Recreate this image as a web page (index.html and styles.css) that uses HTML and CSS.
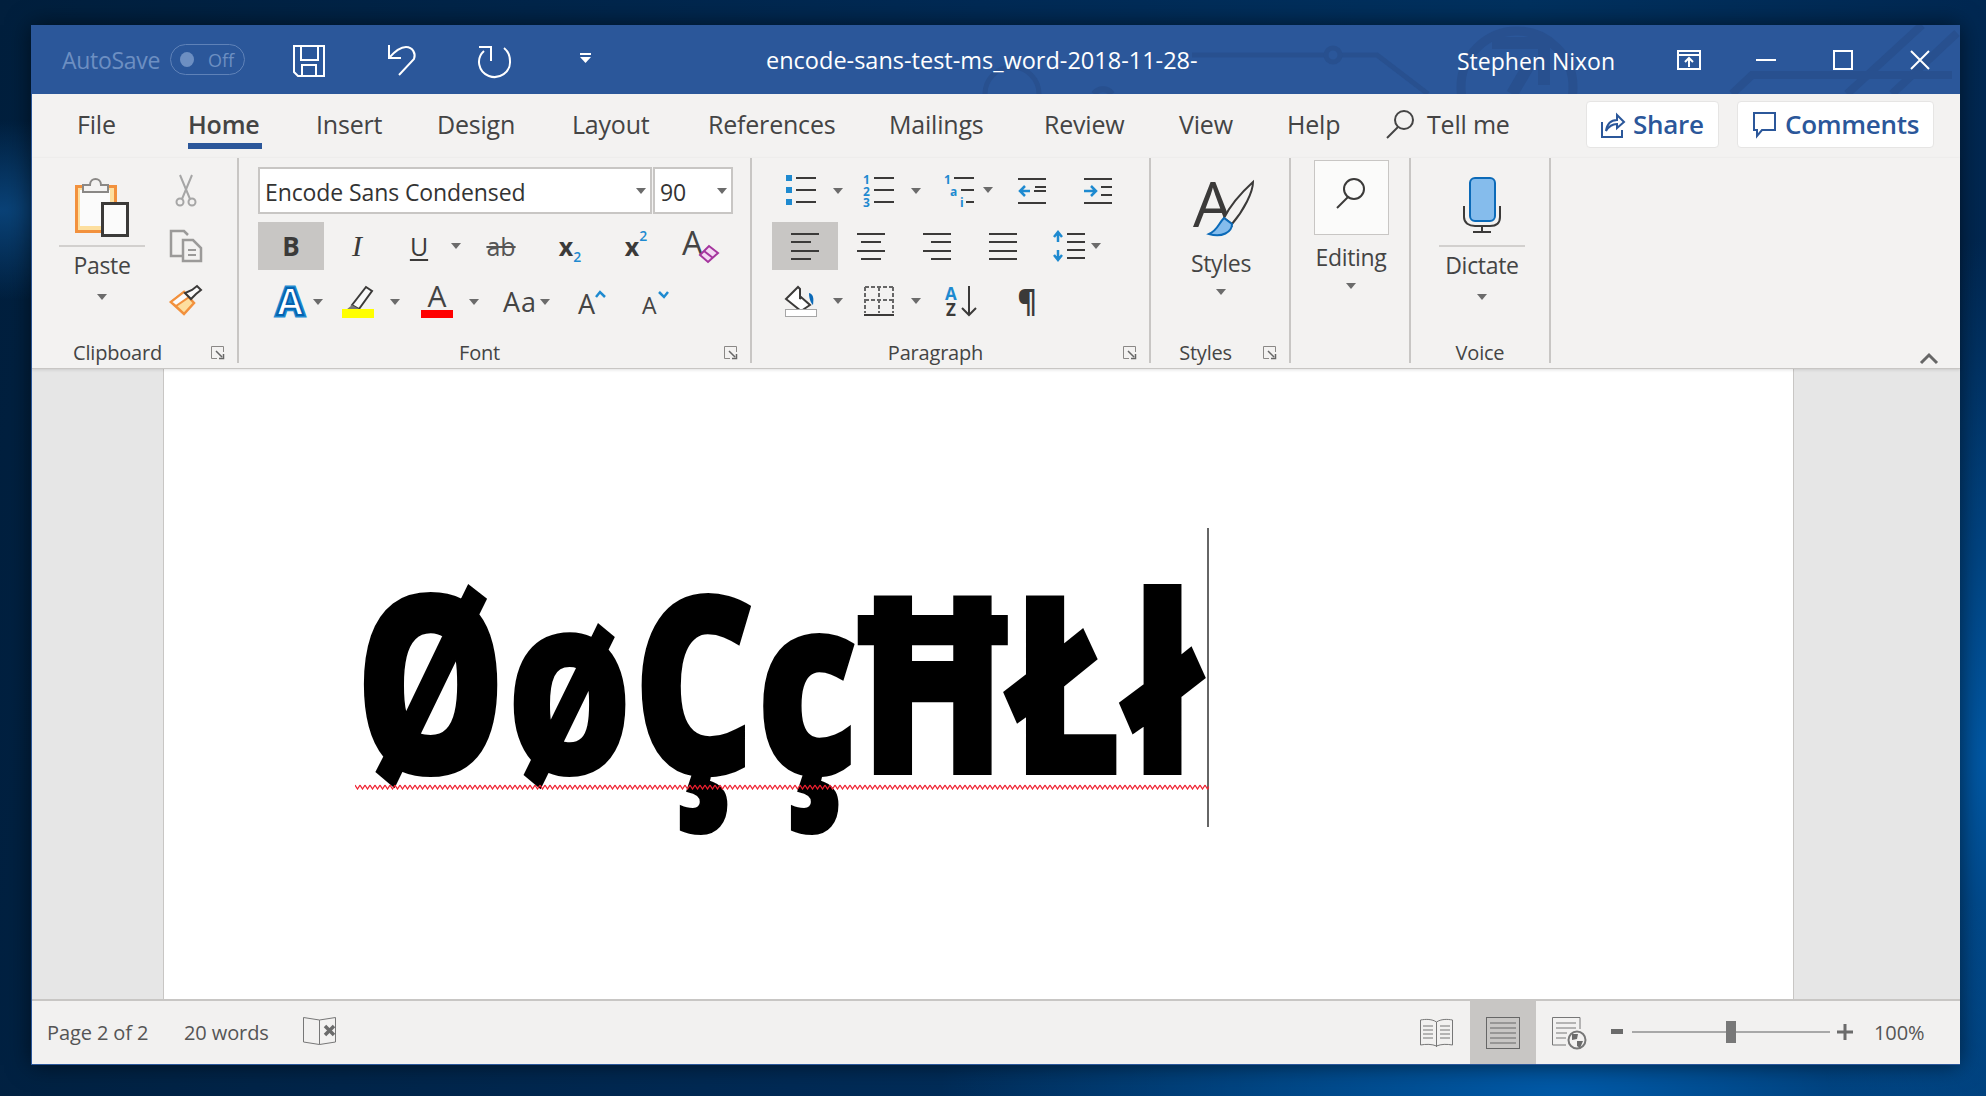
FILE: index.html
```html
<!DOCTYPE html>
<html lang="en">
<head>
    <meta charset="UTF-8">
    <title>encode-sans-test-ms_word-2018-11-28- - Word</title>
    <link rel="stylesheet" href="styles.css">
</head>
<body>

<div class="window">

    <!-- title bar -->
    <div class="titlebar">
        <svg class="circuit" width="1928" height="69" viewBox="0 0 1928 69" fill="none" stroke="#28508f" stroke-width="5">
            <path d="M1160 30H1295M1307 30H1345L1396 69"/>
            <circle cx="1301" cy="30" r="7"/>
            <circle cx="980" cy="69" r="27"/>
            <path d="M1062 69a11 11 0 0 1 18 0" stroke-width="6"/>
            <circle cx="1485" cy="62" r="56" stroke-width="9"/>
            <path d="M1460 18H1512L1512 60M1500 35L1480 69" stroke-width="12"/>
            <path d="M1700 69L1720 50H1920M1815 69L1890 0M1860 69L1925 8" stroke-width="8"/>
        </svg>
        <span class="autosave">AutoSave</span>
        <div class="toggle"><span class="toggle-dot"></span><span>Off</span></div>
        <svg class="qat-save" width="32" height="32" viewBox="0 0 32 32" fill="none" stroke="#fff" stroke-width="2">
            <path d="M1 1H31V31H5L1 27Z"/>
            <path d="M8 1V15H25V1M9 31V20H23V31"/>
        </svg>
        <svg class="qat-undo" width="29" height="33" viewBox="0 0 29 33" fill="none" stroke="#fff" stroke-width="2">
            <path d="M2 2V15H14M2 15C8 8 13 4 19 4C26 4 29 11 27 16L12 32"/>
        </svg>
        <svg class="qat-redo" width="33" height="32" viewBox="0 0 33 32" fill="none" stroke="#fff" stroke-width="2">
            <path d="M26 3C31 7 32 12 32 16A15.500 15 0 1 1 6 6"/>
            <path d="M1 2H13V16"/>
        </svg>
        <svg class="qat-more" width="11" height="10" viewBox="0 0 11 10" fill="#fff">
            <rect width="11" height="2"/>
            <path d="M0 4H11L5.500 10Z"/>
        </svg>
        <span class="doc-title">encode-sans-test-ms_word-2018-11-28-</span>
        <span class="user">Stephen Nixon</span>
        <svg class="win-display" width="24" height="20" viewBox="0 0 24 20" fill="none" stroke="#fff" stroke-width="2">
            <rect x="1" y="1" width="22" height="18"/>
            <path d="M1 5H23M12 17V8M8 12L12 8L16 12"/>
        </svg>
        <span class="win-min"></span>
        <span class="win-max"></span>
        <svg class="win-close" width="20" height="20" viewBox="0 0 20 20" stroke="#fff" stroke-width="2">
            <path d="M1 1L19 19M19 1L1 19"/>
        </svg>
    </div>

    <!-- tabs -->
    <div class="tabs">
        <span class="tab">File</span>
        <span class="tab tab-active">Home</span>
        <span class="tab">Insert</span>
        <span class="tab">Design</span>
        <span class="tab">Layout</span>
        <span class="tab">References</span>
        <span class="tab">Mailings</span>
        <span class="tab">Review</span>
        <span class="tab">View</span>
        <span class="tab">Help</span>
        <svg width="28" height="29" viewBox="0 0 28 29" fill="none" stroke="#444" stroke-width="2">
            <circle cx="18" cy="10" r="9"/>
            <path d="M12 17L1 28"/>
        </svg>
        <span class="tab">Tell me</span>
        <div class="top-btn share-btn">
            <svg width="24" height="30" viewBox="0 0 24 30" fill="none" stroke="#2b579a" stroke-width="2">
                <path d="M1 13V28H21V21M5 22C6 15 10 11 16 11V6L23 13L16 19V15C11 15 8 17 5 22Z"/>
            </svg>
            <span>Share</span>
        </div>
        <div class="top-btn comments-btn">
            <svg width="23" height="27" viewBox="0 0 23 27" fill="none" stroke="#2b579a" stroke-width="2">
                <path d="M1 2H22V19H9L4 25V19H1Z"/>
            </svg>
            <span>Comments</span>
        </div>
    </div>

    <!-- ribbon -->
    <div class="ribbon">

        <div class="group group-clipboard">
            <div class="clip-body">
                <div class="big-btn paste-btn">
                    <svg width="54" height="60" viewBox="0 0 54 60">
                        <rect x="1.500" y="9.500" width="39" height="45" fill="#fddf9f" stroke="#f2913d" stroke-width="3"/>
                        <rect x="5" y="13" width="30" height="36" fill="#fbfbfb"/>
                        <path d="M8 15V8H15C15 0 26 0 26 8H33V15Z" fill="#f3f2f1" stroke="#8a8886" stroke-width="2"/>
                        <rect x="27.500" y="26.500" width="25" height="32" fill="#fbfbfb" stroke="#3b3a39" stroke-width="3"/>
                    </svg>
                    <span class="big-line"></span>
                    <span class="big-text">Paste</span>
                    <span class="caret"></span>
                </div>
                <div class="clip-tools">
                    <svg width="20" height="32" viewBox="0 0 20 32" fill="none" stroke="#a6a6a6" stroke-width="2">
                        <path d="M4 0L14 24M16 0L6 24"/>
                        <circle cx="4" cy="27" r="3.500"/>
                        <circle cx="16" cy="27" r="3.500"/>
                    </svg>
                    <svg width="32" height="32" viewBox="0 0 32 32" fill="none" stroke="#9b9a99" stroke-width="2.500">
                        <path d="M12 26H1V1H14L18 5"/>
                        <path d="M13 10H23L31 18V31H13Z"/>
                        <path d="M18 20H26M18 25H26" stroke-width="2"/>
                    </svg>
                    <svg width="32" height="30" viewBox="0 0 32 30">
                        <path d="M1 17L14 7L24 18L14 29Z" fill="#fddf9f" stroke="#f2913d" stroke-width="2.500"/>
                        <path d="M1 17L14 7L19 12L6 21Z" fill="#fbfbfb" stroke="#f2913d" stroke-width="2"/>
                        <path d="M15 8L21 14L26 9L31 5L27 1L22 5Z" fill="#fbfbfb" stroke="#3b3a39" stroke-width="2"/>
                    </svg>
                </div>
            </div>
            <div class="group-label">Clipboard</div>
            <svg class="launcher" width="13" height="13" viewBox="0 0 13 13" fill="none" stroke="#8a8886">
                <path d="M12.500 6V0.500H0.500V12.500H6"/>
                <path d="M5 5L11 11M12.500 8V12.500H8" stroke="#666" stroke-width="1.500"/>
            </svg>
        </div>

        <div class="group group-font">
            <div class="font-pickers">
                <div class="picker picker-name">
                    <span>Encode Sans Condensed</span>
                    <span class="caret"></span>
                </div>
                <div class="picker picker-size">
                    <span>90</span>
                    <span class="caret"></span>
                </div>
            </div>
            <div class="tool-row font-row-a">
                <div class="tool tool-on glyph-b">B</div>
                <div class="tool glyph-i">I</div>
                <div class="tool glyph-u">U</div>
                <span class="caret"></span>
                <div class="tool glyph-ab">ab</div>
                <div class="tool glyph-x"><span>x</span><sub>2</sub></div>
                <div class="tool glyph-x"><span>x</span><sup>2</sup></div>
                <svg width="40" height="36" viewBox="0 0 40 36">
                    <text x="0" y="27" class="svg-a" font-size="33" fill="#444">A</text>
                    <path d="M18 27L27 18L36 25L26 34Z" fill="#f3d9f3" stroke="#a5359e" stroke-width="2"/>
                    <path d="M22 23L31 30" stroke="#a5359e" stroke-width="2"/>
                </svg>
            </div>
            <div class="tool-row font-row-b">
                <svg width="30" height="32" viewBox="0 0 30 32">
                    <text x="15" y="29" text-anchor="middle" class="svg-a" font-size="38" font-weight="700" fill="#cfe6f8" stroke="#1e8ad0" stroke-width="5" paint-order="stroke">A</text>
                    <text x="15" y="29" text-anchor="middle" class="svg-a" font-size="38" font-weight="700" fill="#fff" stroke="#0563b0" stroke-width="2">A</text>
                </svg>
                <span class="caret"></span>
                <svg width="32" height="33" viewBox="0 0 32 33">
                    <path d="M10 20L24 2L30 6L17 24Z" fill="#f8f8f8" stroke="#3b3a39" stroke-width="2"/>
                    <path d="M10 20L17 24L13 25H4Z" fill="#777"/>
                    <rect y="24" width="32" height="9" fill="#ffff00"/>
                </svg>
                <span class="caret"></span>
                <svg width="32" height="33" viewBox="0 0 32 33">
                    <text x="16" y="22" text-anchor="middle" class="svg-a" font-size="30" fill="#444">A</text>
                    <rect y="25" width="32" height="8" fill="#ff0000"/>
                </svg>
                <span class="caret"></span>
                <div class="tool glyph-aa">Aa</div>
                <span class="caret"></span>
                <svg width="28" height="26" viewBox="0 0 28 26">
                    <text x="0" y="25" class="svg-a" font-size="27" fill="#444">A</text>
                    <path d="M18 8L22 3L27 8" fill="none" stroke="#1e8ad0" stroke-width="2.500"/>
                </svg>
                <svg width="28" height="26" viewBox="0 0 28 26">
                    <text x="0" y="25" class="svg-a" font-size="23" fill="#444">A</text>
                    <path d="M17 3L22 8L26 3" fill="none" stroke="#1e8ad0" stroke-width="2.500"/>
                </svg>
            </div>
            <div class="group-label">Font</div>
            <svg class="launcher" width="13" height="13" viewBox="0 0 13 13" fill="none" stroke="#8a8886">
                <path d="M12.500 6V0.500H0.500V12.500H6"/>
                <path d="M5 5L11 11M12.500 8V12.500H8" stroke="#666" stroke-width="1.500"/>
            </svg>
        </div>

        <div class="group group-para">
            <div class="tool-row para-row-a">
                <svg width="30" height="32" viewBox="0 0 30 32" fill="#1e8ad0">
                    <rect y="0" width="6" height="6"/><rect y="12" width="6" height="6"/><rect y="24" width="6" height="6"/>
                    <path d="M10 3H30M10 15H30M10 27H30" stroke="#3b3a39" stroke-width="2"/>
                </svg>
                <span class="caret"></span>
                <svg width="31" height="32" viewBox="0 0 31 32" fill="#1e8ad0">
                    <text x="0" y="9" class="svg-num">1</text><text x="0" y="21" class="svg-num">2</text><text x="0" y="32" class="svg-num">3</text>
                    <path d="M11 3H31M11 15H31M11 27H31" stroke="#3b3a39" stroke-width="2"/>
                </svg>
                <span class="caret"></span>
                <svg width="49" height="32" viewBox="0 0 49 32" fill="#1e8ad0">
                    <text x="0" y="9" class="svg-num">1</text><text x="6" y="21" class="svg-num">a</text><text x="16" y="32" class="svg-num">i</text>
                    <path d="M10 3H30M17 15H30M22 27H30" stroke="#3b3a39" stroke-width="2"/>
                    <path d="M39 12H49L44 18Z" fill="#6b6b6b"/>
                </svg>
                <svg width="28" height="26" viewBox="0 0 28 26" fill="none" stroke="#3b3a39" stroke-width="2">
                    <path d="M0 1H28M16 13H28M16 25H28M0 25H0"/>
                    <path d="M0 25H28M17 9H28"/>
                    <path d="M12 13H2M7 8L2 13L7 18" stroke="#1e8ad0" stroke-width="2.500"/>
                </svg>
                <svg width="28" height="26" viewBox="0 0 28 26" fill="none" stroke="#3b3a39" stroke-width="2">
                    <path d="M0 1H28M0 25H28M17 9H28M17 17H28"/>
                    <path d="M0 13H11M7 8L12 13L7 18" stroke="#1e8ad0" stroke-width="2.500"/>
                </svg>
            </div>
            <div class="tool-row para-row-b">
                <div class="tool tool-on">
                    <svg class="lines" width="28" height="27" viewBox="0 0 28 27"><path d="M0 1H28M0 9H20M0 18H28M0 26H20"/></svg>
                </div>
                <svg class="lines" width="28" height="27" viewBox="0 0 28 27"><path d="M0 1H28M4 9H24M0 18H28M4 26H24"/></svg>
                <svg class="lines" width="28" height="27" viewBox="0 0 28 27"><path d="M0 1H28M8 9H28M0 18H28M8 26H28"/></svg>
                <svg class="lines" width="28" height="27" viewBox="0 0 28 27"><path d="M0 1H28M0 9H28M0 18H28M0 26H28"/></svg>
                <svg width="48" height="30" viewBox="0 0 48 30" fill="none">
                    <path d="M14 3H32M14 11H32M14 19H32M14 27H32" stroke="#3b3a39" stroke-width="2"/>
                    <path d="M5 1V11M1 6L5 1L9 6M5 19V29M1 24L5 29L9 24" stroke="#1e8ad0" stroke-width="2.500"/>
                    <path d="M38 12H48L43 18Z" fill="#6b6b6b"/>
                </svg>
            </div>
            <div class="tool-row para-row-c">
                <svg width="32" height="32" viewBox="0 0 32 32">
                    <path d="M1 14L13 2L15 4V14L16 12L25 20L16 26Z" fill="#fff" stroke="#3b3a39" stroke-width="2"/>
                    <path d="M24 8C28 9 29 12 28 20C26 18 24 14 24 8Z" fill="#0b6ab8"/>
                    <rect x="0.500" y="24.500" width="31" height="7" fill="#fff" stroke="#a6a6a6"/>
                </svg>
                <span class="caret"></span>
                <svg width="30" height="30" viewBox="0 0 30 30" fill="none" stroke="#666" stroke-width="2" stroke-dasharray="4 2">
                    <path d="M1 1H29M1 1V27M29 1V27M15 1V27M1 14H29"/>
                    <path d="M0 29H30" stroke="#3b3a39" stroke-dasharray="none"/>
                </svg>
                <span class="caret"></span>
                <svg width="32" height="32" viewBox="0 0 32 32">
                    <text x="0" y="15" class="svg-a" font-size="17" font-weight="700" fill="#1e8ad0">A</text>
                    <text x="1" y="31" class="svg-a" font-size="17" font-weight="700" fill="#3b3a39">Z</text>
                    <path d="M24 1V30M17 23L24 30L31 23" fill="none" stroke="#3b3a39" stroke-width="2"/>
                </svg>
                <div class="tool glyph-pil">¶</div>
            </div>
            <div class="group-label">Paragraph</div>
            <svg class="launcher" width="13" height="13" viewBox="0 0 13 13" fill="none" stroke="#8a8886">
                <path d="M12.500 6V0.500H0.500V12.500H6"/>
                <path d="M5 5L11 11M12.500 8V12.500H8" stroke="#666" stroke-width="1.500"/>
            </svg>
        </div>

        <div class="group group-styles">
            <div class="big-btn styles-btn">
                <svg width="60" height="58" viewBox="0 0 60 58">
                    <text x="-1" y="47" class="svg-a" font-size="63" fill="#3b3a39">A</text>
                    <path d="M30 38C36 26 48 12 59 2C59 12 50 30 38 44Z" fill="#f3f2f1" stroke="#3b3a39" stroke-width="2"/>
                    <path d="M30 38L38 44C38 52 28 58 15 54C24 50 24 44 30 38Z" fill="#85bcec" stroke="#0b6ab8" stroke-width="2"/>
                </svg>
                <span class="big-text">Styles</span>
                <span class="caret"></span>
            </div>
            <div class="group-label">Styles</div>
            <svg class="launcher" width="13" height="13" viewBox="0 0 13 13" fill="none" stroke="#8a8886">
                <path d="M12.500 6V0.500H0.500V12.500H6"/>
                <path d="M5 5L11 11M12.500 8V12.500H8" stroke="#666" stroke-width="1.500"/>
            </svg>
        </div>

        <div class="group group-editing">
            <div class="big-btn editing-btn">
                <div class="editing-box">
                    <svg width="30" height="32" viewBox="0 0 30 32" fill="none" stroke="#3b3a39" stroke-width="2">
                        <circle cx="18" cy="12" r="10"/>
                        <path d="M12 20L1 31"/>
                    </svg>
                </div>
                <span class="big-text">Editing</span>
                <span class="caret"></span>
            </div>
        </div>

        <div class="group group-voice">
            <div class="big-btn dictate-btn">
                <svg width="38" height="56" viewBox="0 0 38 56" fill="none">
                    <rect x="7" y="1" width="25" height="43" rx="5" fill="#85bcec" stroke="#0b6ab8" stroke-width="2"/>
                    <path d="M1 29V40C1 46 6 49 12 49H27C33 49 37 46 37 40V29M19 49V55M10 55H28" stroke="#3b3a39" stroke-width="2"/>
                </svg>
                <span class="big-line"></span>
                <span class="big-text">Dictate</span>
                <span class="caret"></span>
            </div>
            <div class="group-label">Voice</div>
        </div>

        <svg class="collapse" width="18" height="12" viewBox="0 0 18 12" fill="none" stroke="#666" stroke-width="3">
            <path d="M1 11L9 3L17 11"/>
        </svg>
    </div>

    <!-- document -->
    <div class="doc-area">
        <div class="page">
            <div class="word">
                <div class="glyphs">ØøÇçĦŁł</div>
                <svg class="squiggle" width="854" height="6">
                    <defs>
                        <pattern id="wave" width="5" height="6" patternUnits="userSpaceOnUse">
                            <path d="M0 1L2.500 5L5 1" fill="none" stroke="#f02030" stroke-width="1.200"/>
                        </pattern>
                    </defs>
                    <rect width="854" height="6" fill="url(#wave)"/>
                </svg>
            </div>
        </div>
    </div>

    <!-- status bar -->
    <div class="statusbar">
        <span class="st-page">Page 2 of 2</span>
        <span class="st-words">20 words</span>
        <svg class="st-proof" width="33" height="28" viewBox="0 0 33 28" fill="none" stroke="#777">
            <path d="M16.500 3L0.500 0.500V25L16.500 27.500L32.500 25V0.500L16.500 3V27.500"/>
            <path d="M22 9L31 18M31 9L22 18" stroke-width="3.500" stroke="#6b6b6b"/>
        </svg>
        <svg class="st-read" width="33" height="30" viewBox="0 0 33 30" fill="none" stroke="#777">
            <path d="M16.500 4C12 1 6 1 0.500 2V27C6 26 12 26 16.500 28C21 26 27 26 32.500 27V2C27 1 21 1 16.500 4V29"/>
            <path d="M3 8H13M3 12H13M3 16H13M3 20H13M20 8H30M20 12H30M20 16H30M20 20H30"/>
        </svg>
        <div class="st-print">
            <svg width="34" height="32" viewBox="0 0 34 32" fill="none" stroke="#666">
                <rect x="0.500" y="0.500" width="33" height="31"/>
                <path d="M4 6H30M4 11H30M4 16H30M4 21H30M4 26H30"/>
            </svg>
        </div>
        <svg class="st-web" width="34" height="32" viewBox="0 0 34 32" fill="none" stroke="#777">
            <path d="M14 28H0.500V0.500H28V12"/>
            <path d="M4 6H24M4 11H24M4 16H15M4 21H14"/>
            <circle cx="25" cy="23" r="8.500" fill="#f2f1f0" stroke-width="2"/>
            <path d="M20 17L26 17L25 22L20 23ZM25 24L31 24L28 31L25 29Z" fill="#6b6b6b" stroke="none"/>
        </svg>
        <span class="st-minus"></span>
        <div class="st-slider"></div>
        <svg class="st-plus" width="16" height="16" viewBox="0 0 16 16" stroke="#6b6b6b" stroke-width="3">
            <path d="M0 8H16M8 0V16"/>
        </svg>
        <span class="st-zoom">100%</span>
    </div>
</div>

</body>
</html>
```

FILE: styles.css
```css
* {
    box-sizing: border-box;
}
html, body {
    height: 100%;
}
body {
    margin: 0;
    overflow: hidden;
    font-family: "Open Sans", "Noto Sans", sans-serif;
    color: #444;
    background-color: #01264d;
    background-image:
        radial-gradient(ellipse 620px 260px at 1560px 1096px, #005aa8 0%, rgba(0, 90, 168, 0) 100%),
        radial-gradient(ellipse 200px 520px at 1986px 760px, #0058a4 0%, rgba(0, 88, 164, 0) 100%),
        radial-gradient(ellipse 260px 90px at 0 210px, #0a4277 0%, rgba(10, 66, 119, 0) 100%),
        linear-gradient(100deg, #011f3d 0%, #012a55 45%, #00315f 70%, #00244c 100%);
    padding: 25px 0 0 31px;
}
svg {
    overflow: visible;
}

.window {
    width: 1929px;
    height: 1040px;
    display: flex;
    flex-direction: column;
    background: #f3f2f1;
    border-left: 1px solid #2b579a;
    border-bottom: 1px solid #2b579a;
    box-shadow: 0 0 22px rgba(0, 0, 0, 0.55);
}

/* title bar */
.titlebar {
    position: relative;
    height: 69px;
    flex: none;
    display: flex;
    align-items: center;
    padding-left: 30px;
    background: #2b579a;
    color: #fff;
    overflow: hidden;
}
.titlebar > * {
    flex: none;
}
.circuit {
    position: absolute;
    left: 0;
    top: 0;
}
.autosave {
    position: relative;
    width: 100px;
    font-size: 23px;
    letter-spacing: -0.3px;
    color: #6d8fc2;
    white-space: nowrap;
}
.toggle {
    display: flex;
    align-items: center;
    gap: 14px;
    width: 75px;
    height: 31px;
    margin-left: 8px;
    padding-left: 9px;
    border: 1px solid #5f82b8;
    border-radius: 16px;
    font-size: 18px;
    color: #6d8fc2;
}
.toggle-dot {
    width: 14px;
    height: 15px;
    border-radius: 50%;
    background: #6d8fc2;
}
.qat-save { margin: 3px 0 0 48px; position: relative; }
.qat-undo { margin-left: 62px; position: relative; }
.qat-redo { margin: 3px 0 0 62px; position: relative; }
.qat-more { margin: 0 0 3px 69px; position: relative; }
.doc-title {
    position: relative;
    width: 440px;
    margin-left: 175px;
    font-size: 23.500px;
    white-space: nowrap;
}
.user {
    position: relative;
    width: 157px;
    margin: 3px 0 0 251px;
    font-size: 23px;
    white-space: nowrap;
}
.win-display { margin-left: 63px; position: relative; }
.win-min {
    position: relative;
    width: 20px;
    height: 2px;
    margin-left: 55px;
    background: #fff;
}
.win-max {
    position: relative;
    width: 20px;
    height: 20px;
    margin-left: 57px;
    border: 2px solid #fff;
}
.win-close { margin-left: 57px; position: relative; }

/* tabs */
.tabs {
    height: 60px;
    margin-bottom: 4px;
    flex: none;
    display: grid;
    grid-template-columns: 111px 128px 121px 135px 136px 181px 155px 135px 108px 99px 41px 159px 151px 197px;
    align-items: center;
    padding-left: 45px;
}
.tab {
    position: relative;
    font-size: 25px;
    letter-spacing: -0.2px;
    white-space: nowrap;
}
.tab-active {
    font-weight: 600;
}
.tab-active::after {
    content: "";
    position: absolute;
    left: 0;
    width: 74px;
    top: 36px;
    height: 6px;
    background: #2b579a;
}
.top-btn {
    display: flex;
    align-items: center;
    height: 47px;
    background: #fff;
    border: 1px solid #e6e5e4;
    border-radius: 4px;
    font-size: 26px;
    font-weight: 600;
    color: #2b579a;
    letter-spacing: -0.3px;
    white-space: nowrap;
}
.share-btn {
    width: 133px;
    gap: 8px;
    padding-left: 14px;
}
.comments-btn {
    width: 197px;
    gap: 9px;
    padding-left: 15px;
}

/* ribbon */
.ribbon {
    position: relative;
    z-index: 1;
    height: 211px;
    flex: none;
    display: flex;
    padding-bottom: 5px;
    border-bottom: 1px solid #c8c6c4;
    box-shadow: 0 1px 3px rgba(0, 0, 0, 0.12);
}
.group {
    position: relative;
    height: 205px;
    display: flex;
    flex-direction: column;
    border-right: 2px solid #c8c6c4;
}
.group-label {
    position: absolute;
    left: 0;
    right: 0;
    bottom: 0;
    height: 20px;
    line-height: 20px;
    font-size: 20px;
    letter-spacing: -0.2px;
    text-align: center;
}
.launcher {
    position: absolute;
    right: 13px;
    bottom: 4px;
}
.group-clipboard { width: 207px; }
.group-font { width: 513px; padding-left: 19px; }
.group-para { width: 399px; padding-left: 20px; }
.group-styles { width: 140px; }
.group-editing { width: 120px; }
.group-voice { width: 140px; }

.group-clipboard .group-label { padding-right: 34px; }
.group-font .group-label { padding-right: 30px; }
.group-para .group-label { padding-right: 30px; }
.group-styles .group-label { padding-right: 29px; }

.caret {
    flex: none;
    width: 0;
    height: 0;
    border-left: 5px solid transparent;
    border-right: 5px solid transparent;
    border-top: 6px solid #6b6b6b;
}

.big-btn {
    display: flex;
    flex-direction: column;
    align-items: center;
}
.big-text {
    font-size: 23px;
    line-height: 28px;
    letter-spacing: -0.3px;
}
.big-line {
    align-self: stretch;
    height: 2px;
    background: #d2d0ce;
}

.clip-body {
    display: flex;
    padding: 19px 0 0 27px;
}
.paste-btn {
    width: 86px;
}
.paste-btn svg {
    margin-bottom: 8px;
}
.paste-btn .big-text {
    margin-top: 4px;
}
.paste-btn .caret,
.dictate-btn .caret {
    margin-top: 15px;
}
.clip-tools {
    display: flex;
    flex-direction: column;
    align-items: center;
    width: 32px;
    margin: -2px 0 0 25px;
    gap: 23px;
}

.font-pickers {
    display: flex;
    margin-top: 9px;
    margin-bottom: 8px;
}
.picker {
    height: 47px;
    display: flex;
    align-items: center;
    justify-content: space-between;
    background: #fff;
    border: 2px solid #c8c6c4;
    padding-top: 2px;
    font-size: 23px;
    letter-spacing: -0.1px;
    color: #333;
}
.picker .caret {
    margin-top: -2px;
}
.picker-name {
    width: 394px;
    padding-left: 5px;
    padding-right: 4px;
}
.picker-size {
    width: 80px;
    margin-left: 1px;
    padding-left: 5px;
    padding-right: 4px;
}

.tool-row {
    display: grid;
    align-items: center;
    justify-items: center;
}
.font-row-a {
    height: 48px;
    grid-template-columns: 66px 66px 58px 16px 74px 64px 68px 64px;
}
.font-row-b {
    height: 33px;
    margin-top: 15px;
    padding-left: 17px;
    justify-items: start;
    grid-template-columns: 38px 29px 48px 31px 48px 34px 37px 38px 64px 50px;
}
.para-row-a {
    height: 32px;
    margin-top: 17px;
    grid-template-columns: 58px 16px 64px 12px 93px 34px 98px;
}
.para-row-b {
    height: 48px;
    margin-top: 15px;
    grid-template-columns: 66px 66px 66px 66px 82px;
}
.para-row-c {
    height: 32px;
    margin-top: 15px;
    grid-template-columns: 58px 16px 66px 8px 82px 50px;
}

.tool {
    display: flex;
    align-items: center;
    justify-content: center;
    height: 48px;
    line-height: 1;
    color: #3b3a39;
}
.tool-on {
    width: 66px;
    background: #c8c6c4;
}
.glyph-b {
    font-size: 26px;
    font-weight: 700;
}
.glyph-i {
    font-family: "Liberation Serif", serif;
    font-style: italic;
    font-size: 30px;
}
.glyph-u {
    font-size: 25px;
    text-decoration: underline;
    text-underline-offset: 3px;
}
.glyph-ab {
    font-size: 25px;
    text-decoration: line-through;
    color: #555;
}
.glyph-x {
    font-size: 25px;
    font-weight: 700;
}
.glyph-x sub,
.glyph-x sup {
    font-size: 14px;
    font-weight: 600;
    color: #1e8ad0;
    line-height: 1;
}
.glyph-x sub {
    margin-top: 22px;
}
.glyph-x sup {
    margin-bottom: 20px;
}
.glyph-aa {
    height: 33px;
    font-size: 27px;
    letter-spacing: 1px;
    color: #444;
}
.glyph-pil {
    height: 32px;
    font-size: 30px;
    font-weight: 700;
}
.svg-a {
    font-family: "Open Sans", "Noto Sans", sans-serif;
}
.svg-num {
    font-family: "Open Sans", "Noto Sans", sans-serif;
    font-size: 12px;
    font-weight: 700;
}
.lines {
    fill: none;
    stroke: #3b3a39;
    stroke-width: 2;
}

.styles-btn {
    width: 100%;
    padding: 22px 0 0 2px;
}
.styles-btn svg {
    margin-left: 5px;
}
.styles-btn .big-text {
    margin-top: 11px;
}
.styles-btn .caret {
    margin-top: 12px;
}
.editing-btn {
    width: 100%;
    padding: 2px 0 0 2px;
}
.editing-box {
    display: flex;
    align-items: center;
    justify-content: center;
    width: 75px;
    height: 75px;
    padding-bottom: 10px;
    background: #fbfbfa;
    border: 1px solid #c8c6c4;
}
.editing-btn .big-text {
    margin-top: 8px;
}
.editing-btn .caret {
    margin-top: 12px;
}
.dictate-btn {
    width: 86px;
    margin: 19px 0 0 28px;
}
.dictate-btn svg {
    margin-bottom: 12px;
}
.dictate-btn .big-text {
    margin-top: 4px;
}
.collapse {
    position: absolute;
    right: 22px;
    bottom: 4px;
}

/* document */
.doc-area {
    flex: 1;
    min-height: 0;
    background: #e6e6e6;
    padding-left: 131px;
}
.page {
    width: 1631px;
    height: 100%;
    padding: 159px 0 0 191px;
    background: #fff;
    border-left: 1px solid #c8c6c4;
    border-right: 1px solid #c8c6c4;
}
.word {
    position: relative;
    width: 854px;
    height: 299px;
    border-right: 2px solid #666;
}
.glyphs {
    font-weight: 800;
    font-size: 249px;
    line-height: 299px;
    color: #000;
    white-space: nowrap;
    transform: scaleX(0.763);
    transform-origin: 0 0;
    -webkit-text-stroke: 2px #000;
}
.squiggle {
    position: absolute;
    left: 0;
    top: 256px;
}

/* status bar */
.statusbar {
    height: 65px;
    flex: none;
    display: flex;
    align-items: center;
    padding-left: 15px;
    background: #f2f1f0;
    border-top: 2px solid #c8c6c4;
    font-size: 20px;
    letter-spacing: -0.1px;
    color: #555;
}
.statusbar > * {
    flex: none;
}
.st-page {
    width: 104px;
    white-space: nowrap;
}
.st-words {
    width: 83px;
    margin-left: 33px;
    white-space: nowrap;
}
.st-proof {
    margin: -4px 0 0 36px;
}
.st-read {
    margin-left: 1084px;
}
.st-print {
    display: flex;
    align-items: center;
    justify-content: center;
    width: 66px;
    height: 63px;
    margin-left: 17px;
    background: #c8c6c4;
}
.st-web {
    margin-left: 16px;
}
.st-minus {
    width: 12px;
    height: 5px;
    margin: -2px 0 0 25px;
    background: #6b6b6b;
}
.st-slider {
    position: relative;
    width: 198px;
    height: 2px;
    margin: -2px 0 0 9px;
    background: #a8a8a8;
}
.st-slider::after {
    content: "";
    position: absolute;
    left: 94px;
    top: -10px;
    width: 10px;
    height: 22px;
    background: #787878;
}
.st-plus {
    margin: -2px 0 0 7px;
}
.st-zoom {
    width: 49px;
    margin-left: 21px;
}
```
